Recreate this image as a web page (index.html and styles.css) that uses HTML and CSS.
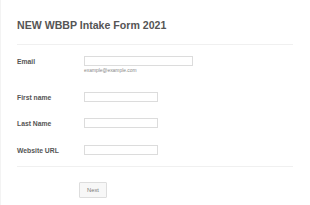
FILE: index.html
```html
<!DOCTYPE html>
<html>
<head>
<meta charset="utf-8">
<link rel="stylesheet" href="styles.css">
</head>
<body>
<div class="page">
  <h1 class="title">NEW WBBP Intake Form 2021</h1>
  <div class="divider"></div>
  <div class="row row-email">
    <label class="label">Email</label>
    <div class="field">
      <div class="input input-wide"></div>
      <div class="helper">example@example.com</div>
    </div>
  </div>
  <div class="row row-first">
    <label class="label">First name</label>
    <div class="field"><div class="input"></div></div>
  </div>
  <div class="row row-last">
    <label class="label">Last Name</label>
    <div class="field"><div class="input"></div></div>
  </div>
  <div class="row row-url">
    <label class="label">Website URL</label>
    <div class="field"><div class="input"></div></div>
  </div>
  <div class="divider divider-bottom"></div>
  <div class="actions">
    <button class="btn">Next</button>
  </div>
</div>
</body>
</html>
```
FILE: styles.css
```css
html, body {
  margin: 0;
  padding: 0;
  background: #fff;
}
body {
  font-family: "Liberation Sans", Arial, sans-serif;
  border-left: 1px solid #f3f3f3;
  height: 205px;
  box-sizing: border-box;
}
.page {
  padding: 19px 17px 0 16px;
  width: 276px;
}
.title {
  margin: 0;
  font-size: 10.6px;
  line-height: 12px;
  font-weight: bold;
  color: #555;
}
.divider {
  margin-top: 13px;
  height: 1px;
  background: #f0f0f0;
}
.row {
  display: flex;
  align-items: flex-start;
}
.label {
  width: 67px;
  height: 10px;
  box-sizing: border-box;
  padding-top: 1px;
  font-size: 6.8px;
  line-height: 10px;
  font-weight: bold;
  color: #555;
}
.field {
  display: flex;
  flex-direction: column;
}
.input {
  width: 74px;
  height: 10px;
  box-sizing: border-box;
  border: 1px solid #dcdcdc;
  background: #fff;
}
.input-wide {
  width: 109px;
}
.helper {
  margin-top: 2px;
  font-size: 4.9px;
  line-height: 6px;
  color: #888;
}
.row-email { margin-top: 11px; }
.row-first { margin-top: 18px; }
.row-last { margin-top: 16px; }
.row-url { margin-top: 17px; }
.divider-bottom { margin-top: 11px; }
.actions {
  margin-top: 11px;
  padding-left: 62px;
}
.btn {
  width: 28px;
  height: 16px;
  padding: 0;
  border: 1px solid #ddd;
  border-radius: 1px;
  background: #f7f7f7;
  font-family: "Liberation Sans", Arial, sans-serif;
  font-size: 5.8px;
  color: #777;
}
```
